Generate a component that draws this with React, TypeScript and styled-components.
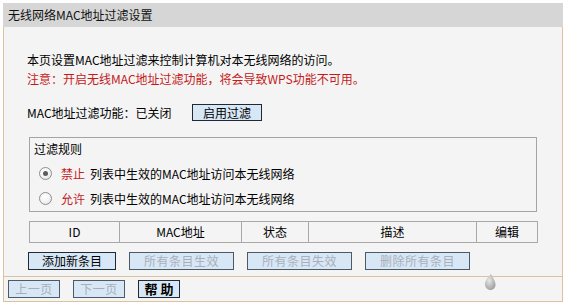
import React from "react";
import styled, { createGlobalStyle } from "styled-components";

const Global = createGlobalStyle`
  html, body { margin: 0; padding: 0; background: #ffffff; }
  body { font-family: "Noto Sans CJK SC", "Noto Sans", sans-serif; font-size: 12px; color: #000; }
`;

const Page = styled.div`
  padding: 3px 3px 0 3px;
  width: 560px;
`;

const Panel = styled.div`
  width: 560px;
`;

const Header = styled.div`
  height: 24px;
  line-height: 24px;
  background: #d6d6d6;
  padding-left: 5px;
  font-size: 12px;
  color: #111;
`;

const Body = styled.div`
  background: #f4f4f4;
  border-left: 1px solid #dcc29a;
  border-right: 1px solid #dcc29a;
  padding: 23px 0 6px 23px;
`;

const Line = styled.div<{ $red?: boolean }>`
  line-height: 19px;
  height: 19px;
  color: ${(p) => (p.$red ? "#c41a1a" : "#000")};
  white-space: nowrap;
`;

const StatusRow = styled.div`
  display: flex;
  align-items: center;
  height: 20px;
  margin-top: 14px;
`;

const StatusText = styled.span`
  width: 165px;
  white-space: nowrap;
`;

const Btn = styled.button<{ $w: number; $disabled?: boolean; $bold?: boolean }>`
  width: ${(p) => p.$w}px;
  height: 18px;
  padding: 0;
  margin: 0;
  background: #d8e7f6;
  border: 1px solid ${(p) => (p.$disabled ? "#4d5966" : "#1f2a36")};
  color: ${(p) => (p.$disabled ? "#a7b0ba" : "#000")};
  font-family: "Noto Sans CJK SC", sans-serif;
  font-size: ${(p) => (p.$bold ? "13px" : "12px")};
  font-weight: ${(p) => (p.$bold ? "bold" : "normal")};
  line-height: 16px;
  letter-spacing: ${(p) => (p.$disabled ? "0.5px" : "0")};
  cursor: default;
  box-sizing: border-box;
`;

const SmallBtn = styled(Btn)`
  height: 17px;
`;

const Group = styled.div`
  margin: 15px 0 0 2px;
  width: 508px;
  box-sizing: border-box;
  border: 1px solid #a4a4a4;
  padding: 2px 0 0 4px;
`;

const GroupTitle = styled.div`
  line-height: 18px;
  height: 18px;
  margin-bottom: 3px;
`;

const RadioRow = styled.div`
  display: flex;
  align-items: center;
  height: 25px;
  padding-left: 5px;
`;

const Radio = styled.span<{ $checked?: boolean }>`
  width: 11px;
  height: 11px;
  border-radius: 50%;
  border: 1px solid #8e8e8e;
  background: radial-gradient(circle at 40% 35%, #ffffff 0%, #f2f2f2 55%, #d8d8d8 100%);
  display: flex;
  align-items: center;
  justify-content: center;
  margin-right: 9px;
  &::after {
    content: "";
    display: ${(p) => (p.$checked ? "block" : "none")};
    width: 5px;
    height: 5px;
    border-radius: 50%;
    background: #5c5c5c;
  }
`;

const RedWord = styled.span`
  color: #c41a1a;
  margin-right: 5px;
`;

const Table = styled.table`
  margin: 9px 0 0 2px;
  width: 508px;
  border-collapse: collapse;
  table-layout: fixed;
`;

const Th = styled.td`
  height: 20px;
  border: 1px solid #a8a8a8;
  text-align: center;
  padding: 0;
  line-height: 20px;
  box-sizing: border-box;
`;

const ActionRow = styled.div`
  display: flex;
  gap: 13px;
  margin: 9px 0 0 1px;
`;

const Footer = styled.div`
  position: relative;
  background: #f4f4f4;
  border: 1px solid #dcc29a;
  padding: 3px 4px 3px 4px;
  display: flex;
  gap: 13px;
`;

const Watermark = styled.svg`
  position: absolute;
  left: 479px;
  top: -4px;
`;

const cols = [90, 122, 67, 168, 61];

export default function App() {
  return (
    <Page>
      <Global />
      <Panel>
        <Header>无线网络MAC地址过滤设置</Header>
        <Body>
          <Line>本页设置MAC地址过滤来控制计算机对本无线网络的访问。</Line>
          <Line $red>注意：开启无线MAC地址过滤功能，将会导致WPS功能不可用。</Line>
          <StatusRow>
            <StatusText>MAC地址过滤功能：已关闭</StatusText>
            <SmallBtn $w={70}>启用过滤</SmallBtn>
          </StatusRow>
          <Group>
            <GroupTitle>过滤规则</GroupTitle>
            <RadioRow>
              <Radio $checked />
              <RedWord>禁止</RedWord>
              列表中生效的MAC地址访问本无线网络
            </RadioRow>
            <RadioRow>
              <Radio />
              <RedWord>允许</RedWord>
              列表中生效的MAC地址访问本无线网络
            </RadioRow>
          </Group>
          <Table>
            <colgroup>
              {cols.map((w, i) => (
                <col key={i} style={{ width: w }} />
              ))}
            </colgroup>
            <tbody>
              <tr>
                <Th>ID</Th>
                <Th>MAC地址</Th>
                <Th>状态</Th>
                <Th>描述</Th>
                <Th>编辑</Th>
              </tr>
            </tbody>
          </Table>
          <ActionRow>
            <Btn $w={88}>添加新条目</Btn>
            <Btn $w={105} $disabled>所有条目生效</Btn>
            <Btn $w={105} $disabled>所有条目失效</Btn>
            <Btn $w={105} $disabled>删除所有条目</Btn>
          </ActionRow>
        </Body>
        <Footer>
          <Btn $w={52} $disabled>上一页</Btn>
          <Btn $w={52} $disabled>下一页</Btn>
          <Btn $w={42} $bold>帮 助</Btn>
          <Watermark width="14" height="18" viewBox="0 0 14 18">
            <defs>
              <radialGradient id="wm" cx="40%" cy="40%" r="70%">
                <stop offset="0%" stopColor="#e8e8e8" />
                <stop offset="100%" stopColor="#9a9a9a" />
              </radialGradient>
            </defs>
            <path d="M8 1 C4 5 2 8 2 11 C2 14.5 4.5 17 7.5 17 C10.5 17 12.5 14.5 12.5 11.5 C12.5 8 10 5 8 1 Z" fill="url(#wm)" />
          </Watermark>
        </Footer>
      </Panel>
    </Page>
  );
}
